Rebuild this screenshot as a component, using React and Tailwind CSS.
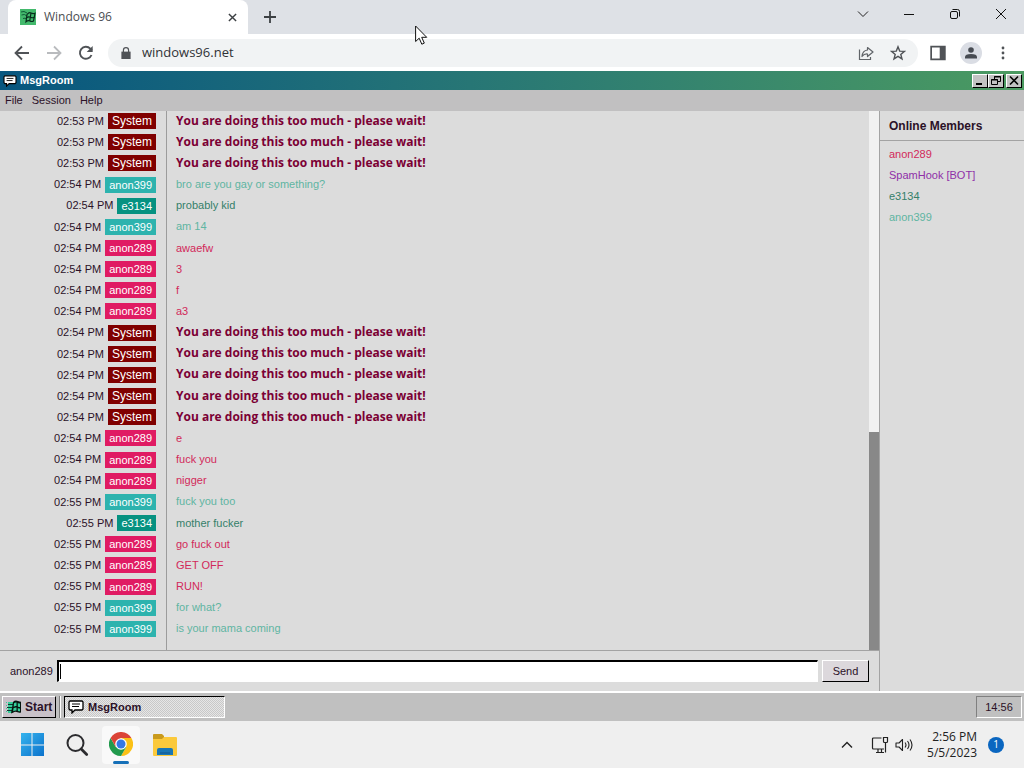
import React, { useState } from 'react';

const tagColors = {
  System: 'bg-[#800000] text-[12px]',
  anon399: 'bg-[#2db3ae] text-[11px]',
  e3134: 'bg-[#069281] text-[11px]',
  anon289: 'bg-[#e01b63] text-[11px]',
};

const textColors = {
  System: "text-[#7b0034] font-bold text-[12px] font-['Open_Sans',Verdana,sans-serif]",
  anon399: 'text-[#5fb5a2] text-[11px]',
  e3134: 'text-[#35806a] text-[11px]',
  anon289: 'text-[#d2295a] text-[11px]',
};

const WAIT = 'You are doing this too much - please wait!';

const messages = [
  ['02:53 PM', 'System', WAIT],
  ['02:53 PM', 'System', WAIT],
  ['02:53 PM', 'System', WAIT],
  ['02:54 PM', 'anon399', 'bro are you gay or something?'],
  ['02:54 PM', 'e3134', 'probably kid'],
  ['02:54 PM', 'anon399', 'am 14'],
  ['02:54 PM', 'anon289', 'awaefw'],
  ['02:54 PM', 'anon289', '3'],
  ['02:54 PM', 'anon289', 'f'],
  ['02:54 PM', 'anon289', 'a3'],
  ['02:54 PM', 'System', WAIT],
  ['02:54 PM', 'System', WAIT],
  ['02:54 PM', 'System', WAIT],
  ['02:54 PM', 'System', WAIT],
  ['02:54 PM', 'System', WAIT],
  ['02:54 PM', 'anon289', 'e'],
  ['02:54 PM', 'anon289', 'fuck you'],
  ['02:54 PM', 'anon289', 'nigger'],
  ['02:55 PM', 'anon399', 'fuck you too'],
  ['02:55 PM', 'e3134', 'mother fucker'],
  ['02:55 PM', 'anon289', 'go fuck out'],
  ['02:55 PM', 'anon289', 'GET OFF'],
  ['02:55 PM', 'anon289', 'RUN!'],
  ['02:55 PM', 'anon399', 'for what?'],
  ['02:55 PM', 'anon399', 'is your mama coming'],
];

const members = [
  { name: 'anon289', color: 'text-[#d2295a]' },
  { name: 'SpamHook [BOT]', color: 'text-[#8f2fa8]' },
  { name: 'e3134', color: 'text-[#35806a]' },
  { name: 'anon399', color: 'text-[#5fb5a2]' },
];

function FlagIcon({ className }) {
  return (
    <svg viewBox="0 0 16 16" className={className} aria-hidden="true">
      <path d="M0 3h1v1H0zM0 6h1v1H0zM0 9h1v1H0zM0 12h1v1H0zM2 3h5v2H2zM2 6h5v2H2zM2 9h4v2H2zM2 12h4v2H2z" fill="#35cf9a" />
      <path d="M2 5h5v1H2zM1 8h5v1H1zM1 11h5v1H1z" fill="#0c3a30" />
      <path d="M7 3Q9 .8 12 2q1.500.8 3 .8V13.500q-2 .5-3.500-.3-2.500-1.200-4.500.6L5 14.500z" fill="#06140f" />
      <path d="M8 4.200q1.300-1 2.500-.7v3.600q-1.500-.2-2.800.6z" fill="#35cf9a" />
      <path d="M11.800 4q1.100.5 2.200.5V8q-1.100 0-2.200-.5z" fill="#35cf9a" />
      <path d="M7.500 9.200q1.500-.9 3-.7v3q-1.800-.2-3.300.8z" fill="#35cf9a" />
      <path d="M11.800 9q1.100.5 2.200.5v2.800q-1.100.1-2.200-.5z" fill="#35cf9a" />
    </svg>
  );
}

function FlagFavicon() {
  return (
    <svg viewBox="0 0 16 16" className="mr-2 h-4 w-4" aria-hidden="true">
      <path d="M0 0h16v16H0z" fill="#43b96c" />
      <path d="M1 3q3-1.500 6 1M1.500 6q3-1.500 5.500 1M3 9.500q2-1 4 .5" fill="none" stroke="#0e5a36" strokeWidth="1" />
      <path d="M7 5.500Q9 3 11 4q2 1 4 .2L13.500 12q-2 1-3.500 0-2-1-4 .8z" fill="#43b96c" stroke="#082c1c" strokeWidth="1.200" />
      <path d="M11 4L9.700 12M6.500 8.800q2-1.600 4-.6t4 .2" fill="none" stroke="#082c1c" strokeWidth="1.200" />
    </svg>
  );
}

function ChatIcon({ className }) {
  return (
    <svg viewBox="0 0 16 14" className={className} aria-hidden="true">
      <path d="M2 1h12l1 1v7l-1 1H7l-3 3v-3H2L1 9V2z" fill="#fff" stroke="#000" strokeWidth="1.300" />
      <path d="M4 4h8M4 6.500h7" stroke="#000" strokeWidth="1" />
    </svg>
  );
}

function ChromeLogo() {
  return (
    <svg viewBox="0 0 24 24" className="h-6 w-6 shrink-0" aria-hidden="true">
      <circle cx="12" cy="12" r="12" fill="#fff" />
      <path d="M22.400 6A12 12 0 0 1 12 24l5.200-9L12 6z" fill="#fbc116" />
      <path d="M1.600 6A12 12 0 0 0 12 24l5.200-9H6.800z" fill="#229a4d" />
      <path d="M12 6h10.400A12 12 0 0 0 1.600 6l5.200 9z" fill="#db4437" />
      <circle cx="12" cy="12" r="5.800" fill="#fff" />
      <circle cx="12" cy="12" r="4.500" fill="#3478e5" />
    </svg>
  );
}

function BrowserTabs() {
  return (
    <div className="flex h-[34px] shrink-0 items-start bg-[#dee1e6]">
      <div className="ml-2 flex h-[34px] w-[240px] items-center rounded-t-lg bg-white pl-3 pr-3">
        <FlagFavicon />
        <span className="flex-1 text-[12px] text-[#4a4d51]">Windows 96</span>
        <button aria-label="Close tab" className="flex h-4 w-2 items-center justify-center">
          <svg viewBox="0 0 10 10" className="h-[9px] w-[9px] shrink-0" stroke="#3c4043" strokeWidth="1.600">
            <path d="M1 1l8 8M9 1l-8 8" />
          </svg>
        </button>
      </div>
      <button aria-label="New tab" className="ml-3 flex h-[34px] w-5 items-center justify-center">
        <svg viewBox="0 0 12 12" className="h-3 w-3" stroke="#3c4043" strokeWidth="1.800">
          <path d="M6 0v12M0 6h12" />
        </svg>
      </button>
      <div className="ml-auto flex h-[28px] items-center">
        <button aria-label="Search tabs" className="flex w-[46px] justify-center">
          <svg viewBox="0 0 12 12" className="h-3 w-3" fill="none" stroke="#222">
            <path d="M1 3.500l5 5 5-5" />
          </svg>
        </button>
        <button aria-label="Minimize" className="flex w-[46px] justify-center">
          <svg viewBox="0 0 12 12" className="h-3 w-3" stroke="#111">
            <path d="M1 6.500h10" />
          </svg>
        </button>
        <button aria-label="Restore" className="flex w-[46px] justify-center">
          <svg viewBox="0 0 12 12" className="h-3 w-3" fill="none" stroke="#111">
            <rect x="1.500" y="3.500" width="7" height="7" rx="1.500" />
            <path d="M3.500 1.500h5a2 2 0 0 1 2 2v5" />
          </svg>
        </button>
        <button aria-label="Close window" className="flex w-[46px] justify-center">
          <svg viewBox="0 0 12 12" className="h-3 w-3" stroke="#111">
            <path d="M1 1l10 10M11 1L1 11" />
          </svg>
        </button>
      </div>
    </div>
  );
}

function BrowserToolbar({ url, onUrlChange }) {
  return (
    <div className="flex h-[37px] shrink-0 items-center bg-white pl-[14px] pr-[14px]">
      <div className="flex gap-4">
        <button aria-label="Back">
          <svg viewBox="0 0 16 16" className="h-4 w-4" fill="none" stroke="#505357" strokeWidth="1.800">
            <path d="M15 8H2M8 1.500L1.500 8 8 14.500" />
          </svg>
        </button>
        <button aria-label="Forward">
          <svg viewBox="0 0 16 16" className="h-4 w-4" fill="none" stroke="#b9bbbe" strokeWidth="1.800">
            <path d="M1 8h13M8 1.500L14.500 8 8 14.500" />
          </svg>
        </button>
        <button aria-label="Reload">
          <svg viewBox="0 0 16 16" className="h-4 w-4" fill="none" stroke="#505357" strokeWidth="1.900">
            <path d="M13.500 10A6 6 0 1 1 12.300 3.700L14 5.400" />
            <path d="M14.700 1v6H8.700z" fill="#505357" stroke="none" />
          </svg>
        </button>
      </div>
      <div className="ml-[14px] flex h-7 flex-1 items-center rounded-full bg-[#f1f3f4] pl-3 pr-3">
        <svg viewBox="0 0 10 13" className="h-3 w-3" aria-hidden="true">
          <path d="M0 5h10v8H0z" fill="#505357" />
          <path d="M2.200 6V3.500a2.800 2.800 0 0 1 5.600 0V6" fill="none" stroke="#505357" strokeWidth="1.300" />
        </svg>
        <input
          aria-label="Address"
          value={url}
          onChange={(e) => onUrlChange(e.target.value)}
          className="ml-[10px] min-w-0 flex-1 bg-transparent text-[13px] text-[#303236] outline-none"
        />
        <button aria-label="Share">
          <svg viewBox="0 0 16 16" className="h-4 w-4" fill="none" stroke="#606468" strokeWidth="1.200">
            <path d="M1.500 4.500v10h11V12" />
            <path d="M9.500 2.500L15 7l-5.500 4.500V9Q6 8.700 4 11.500 4.500 5.500 9.500 5z" strokeLinejoin="round" />
          </svg>
        </button>
        <button aria-label="Bookmark" className="ml-4">
          <svg viewBox="0 0 16 16" className="h-4 w-4" fill="none" stroke="#505357" strokeWidth="1.400">
            <path d="M8 1.800l1.700 4.300 4.700.3-3.600 3 1.200 4.500L8 11.400l-4 2.500 1.200-4.500-3.600-3 4.700-.3z" />
          </svg>
        </button>
      </div>
      <button aria-label="Side panel" className="ml-3">
        <svg viewBox="0 0 14 14" className="h-4 w-4">
          <path d="M1 1.500h12v11H1z" fill="none" stroke="#505357" strokeWidth="1.500" />
          <path d="M8.500 1.500H13v11H8.500z" fill="#505357" />
        </svg>
      </button>
      <button aria-label="Profile" className="ml-[14px] flex h-[22px] w-[22px] items-center justify-center rounded-full bg-[#dadde4]">
        <svg viewBox="0 0 12 12" className="h-3 w-3" fill="#474b52">
          <circle cx="6" cy="3" r="2.800" />
          <path d="M0 11.500V10q0-3 6-3t6 3v1.500z" />
        </svg>
      </button>
      <button aria-label="Menu" className="ml-[14px]">
        <svg viewBox="0 0 14 14" className="h-[14px] w-[14px]" fill="#505357">
          <circle cx="7" cy="2" r="1.400" />
          <circle cx="7" cy="7" r="1.400" />
          <circle cx="7" cy="12" r="1.400" />
        </svg>
      </button>
    </div>
  );
}

function WindowButton({ label, children }) {
  return (
    <button
      aria-label={label}
      className="flex h-[14px] w-4 items-center justify-center border border-b-black border-l-white border-r-black border-t-white bg-[#c3c3c3]"
    >
      <svg viewBox="0 0 12 11" className="h-[11px] w-3" fill="none" stroke="#000">
        {children}
      </svg>
    </button>
  );
}

function MessageRow({ message }) {
  const [time, user, text] = message;

  return (
    <li className="flex min-h-0 flex-1">
      <div className="flex w-[167px] shrink-0 items-center justify-end border-r border-[#9c9c9c] pb-px pr-[10px]">
        <span className="mr-1 text-[11px] text-[#2b1128]">{time}</span>
        <span className={`h-4 px-1 leading-[17px] text-white ${tagColors[user]}`}>{user}</span>
      </div>
      <div className="flex flex-1 items-center pb-[2px] pl-[9px]">
        <span className={`leading-4 ${textColors[user]}`}>{text}</span>
      </div>
    </li>
  );
}

export default function App() {
  const [url, setUrl] = useState('windows96.net');
  const [draft, setDraft] = useState('');

  return (
    <div className="relative flex h-screen flex-col overflow-hidden bg-[#dcdcdc] font-['Open_Sans','Noto_Sans',sans-serif]">
      <BrowserTabs />
      <BrowserToolbar url={url} onUrlChange={setUrl} />

      {/* Windows 96 desktop */}
      <div className="flex min-h-0 flex-1 flex-col font-['Liberation_Sans',Arial,sans-serif] text-[11px] text-[#2b1128]">
        <header className="flex h-[19px] shrink-0 items-center bg-linear-to-r from-[#07567f] to-[#4b9a60] pl-[3px] pr-[2px]">
          <ChatIcon className="h-3 w-[14px]" />
          <h1 className="ml-[3px] flex-1 text-[11px] font-bold text-white">MsgRoom</h1>
          <WindowButton label="Minimize MsgRoom">
            <path d="M2 9h6" strokeWidth="2" />
          </WindowButton>
          <WindowButton label="Restore MsgRoom">
            <path d="M4.500 4V1.500h6v5H8M4 2h7M1.500 4.500h6v5h-6zM1 5h7" />
          </WindowButton>
          <div className="w-[2px]" />
          <WindowButton label="Close MsgRoom">
            <path d="M2 1.500l8 8M10 1.500l-8 8" strokeWidth="1.600" />
          </WindowButton>
        </header>

        <nav className="flex h-[21px] shrink-0 items-center gap-[9px] bg-[#c1c0c1] pl-[5px]">
          <button>File</button>
          <button>Session</button>
          <button>Help</button>
        </nav>

        <div className="flex min-h-0 flex-1">
          <main className="flex min-w-0 flex-1 flex-col border-r border-[#a3a3a3]">
            <div className="flex min-h-0 flex-1 border-b border-[#a3a3a3]">
              <ul className="flex min-w-0 flex-1 flex-col">
                {messages.map((message, i) => (
                  <MessageRow key={i} message={message} />
                ))}
                <li aria-hidden="true" className="h-[10px] w-[167px] border-r border-[#9c9c9c]" />
              </ul>
              {/* Scrollbar */}
              <div className="flex w-[10px] flex-col justify-end bg-[#f1f1f1]">
                <div className="h-[218px] bg-[#888888]" />
              </div>
            </div>
            <form
              onSubmit={(e) => e.preventDefault()}
              className="flex h-10 shrink-0 items-center pl-[10px] pr-[10px]"
            >
              <label htmlFor="draft">anon289</label>
              <div className="ml-[4px] flex h-[22px] min-w-0 flex-1 items-center border-b border-l-2 border-r border-t-2 border-b-white border-l-black border-r-white border-t-black bg-white pl-px">
                {!draft && <span className="h-[15px] w-px bg-black" />}
                <input
                  id="draft"
                  value={draft}
                  onChange={(e) => setDraft(e.target.value)}
                  className="min-w-0 flex-1 bg-transparent outline-none"
                />
              </div>
              <button className="ml-1 h-[22px] w-[47px] border border-b-black border-l-white border-r-black border-t-white bg-[#dcd8dc]">
                Send
              </button>
            </form>
          </main>

          <aside className="w-[144px] shrink-0">
            <h2 className="h-[30px] border-b border-[#a3a3a3] pl-[9px] text-[12px] font-bold leading-[30px]">
              Online Members
            </h2>
            <ul className="pl-[9px] pt-[3px]">
              {members.map((member) => (
                <li key={member.name} className={`h-[21px] leading-[21px] ${member.color}`}>
                  {member.name}
                </li>
              ))}
            </ul>
          </aside>
        </div>

        <footer className="flex h-[30px] shrink-0 items-center border-t-2 border-white bg-[#c0c0c0] pl-[2px] pr-[2px]">
          <button className="flex h-[22px] w-[54px] items-center border border-b-black border-l-white border-r-black border-t-white bg-[#c8c1c8] pl-[3px]">
            <FlagIcon className="h-4 w-4" />
            <span className="ml-[3px] text-[12px] font-bold">Start</span>
          </button>
          <div className="ml-[3px] h-[22px] w-[2px] border-l border-r border-l-[#808080] border-r-white" />
          <button className="ml-[3px] flex h-[22px] w-[161px] items-center border border-b-white border-l-black border-r-white border-t-black bg-[repeating-conic-gradient(#e6e6e6_0_25%,#c8c8c8_0_50%)] bg-[length:2px_2px] pl-[3px]">
            <ChatIcon className="h-[14px] w-4" />
            <span className="ml-1 text-[11px] font-bold">MsgRoom</span>
          </button>
          <div className="ml-auto flex h-[22px] w-[46px] items-center justify-center border border-b-white border-l-[#808080] border-r-white border-t-[#808080]">
            14:56
          </div>
        </footer>
      </div>

      {/* Host taskbar */}
      <div className="flex h-[47px] shrink-0 items-center bg-[#efefef] pl-5 pr-5">
        <button aria-label="Start menu">
          <svg viewBox="0 0 24 24" className="h-6 w-6">
            <defs>
              <linearGradient id="win" x1="0" y1="0" x2="1" y2="1">
                <stop offset="0" stopColor="#35b4ee" />
                <stop offset="1" stopColor="#0c72cc" />
              </linearGradient>
            </defs>
            <path d="M1 0h10.500v11.500H1zM12.500 0H24v11.500H12.500zM1 12.500h10.500V23H1zM12.500 12.500H24V23H12.500z" fill="url(#win)" />
          </svg>
        </button>
        <button aria-label="Search" className="ml-[21px]">
          <svg viewBox="0 0 24 24" className="h-6 w-6" fill="none" stroke="#2b2b2e">
            <circle cx="10.500" cy="10" r="8" strokeWidth="2" />
            <path d="M16.200 16l5.500 5.500" strokeWidth="2.800" strokeLinecap="round" />
          </svg>
        </button>
        <button aria-label="Chrome" className="ml-[13px] flex h-[38px] w-[38px] flex-col items-center rounded bg-[#f9f9f9] pt-[6px]">
          <ChromeLogo />
          <span className="mt-[5px] h-[3px] w-4 shrink-0 rounded-full bg-[#1670b8]" />
        </button>
        <button aria-label="File Explorer" className="ml-3">
          <svg viewBox="0 0 26 24" className="h-6 w-[26px]">
            <path d="M1 2q0-1 1-1h8l2 2v4H1z" fill="#c99a1d" />
            <path d="M1 6h9l2-2h12q1 0 1 1v17q0 1-1 1H2q-1 0-1-1z" fill="#fbc93b" />
            <path d="M5 22v-5q0-2 2-2h12q2 0 2 2v5z" fill="#1976b5" />
            <path d="M8 19h10v2H8z" fill="#1565a0" />
          </svg>
        </button>
        <div className="ml-auto flex items-center">
          <button aria-label="Show hidden icons">
            <svg viewBox="0 0 12 12" className="h-3 w-3" fill="none" stroke="#222" strokeWidth="1.400">
              <path d="M1 8.500l5-5 5 5" />
            </svg>
          </button>
          <svg viewBox="0 0 18 18" className="ml-[18px] h-[18px] w-[18px]" fill="none" stroke="#222" strokeWidth="1.200" aria-hidden="true">
            <path d="M10.500 2H2.500q-1 0-1 1v9q0 1 1 1H13M5 16.500h8M7 13v3M10.500 13v3" />
            <path d="M12.500 1.500h4v4q0 1-1 1h-2q-1 0-1-1zM14.500 6.500v10" />
          </svg>
          <svg viewBox="0 0 18 16" className="ml-[6px] h-4 w-[18px]" fill="none" stroke="#222" strokeWidth="1.100" aria-hidden="true">
            <path d="M1 6h3l3.500-3.500v11L4 10H1z" strokeLinejoin="round" />
            <path d="M10 5.500q2 2.500 0 5M12.500 4q3 4 0 8M15 2.500q4 5.500 0 11" />
          </svg>
          <div className="ml-[14px] text-right text-[12px] leading-4 text-[#222]">
            <div>2:56 PM</div>
            <div>5/5/2023</div>
          </div>
          <span className="ml-[11px] flex h-4 w-4 items-center justify-center rounded-full bg-[#0a66c0] text-[10px] text-white">
            1
          </span>
        </div>
      </div>

      {/* Mouse pointer */}
      <svg viewBox="0 0 13 20" className="pointer-events-none absolute left-[415px] top-[25px] h-5 w-[13px]" aria-hidden="true">
        <path d="M.6 1v15.500l3.600-3.300 2.600 6 2.500-1.100-2.600-5.800h5z" fill="#fff" stroke="#111" strokeWidth="1" />
      </svg>
    </div>
  );
}
